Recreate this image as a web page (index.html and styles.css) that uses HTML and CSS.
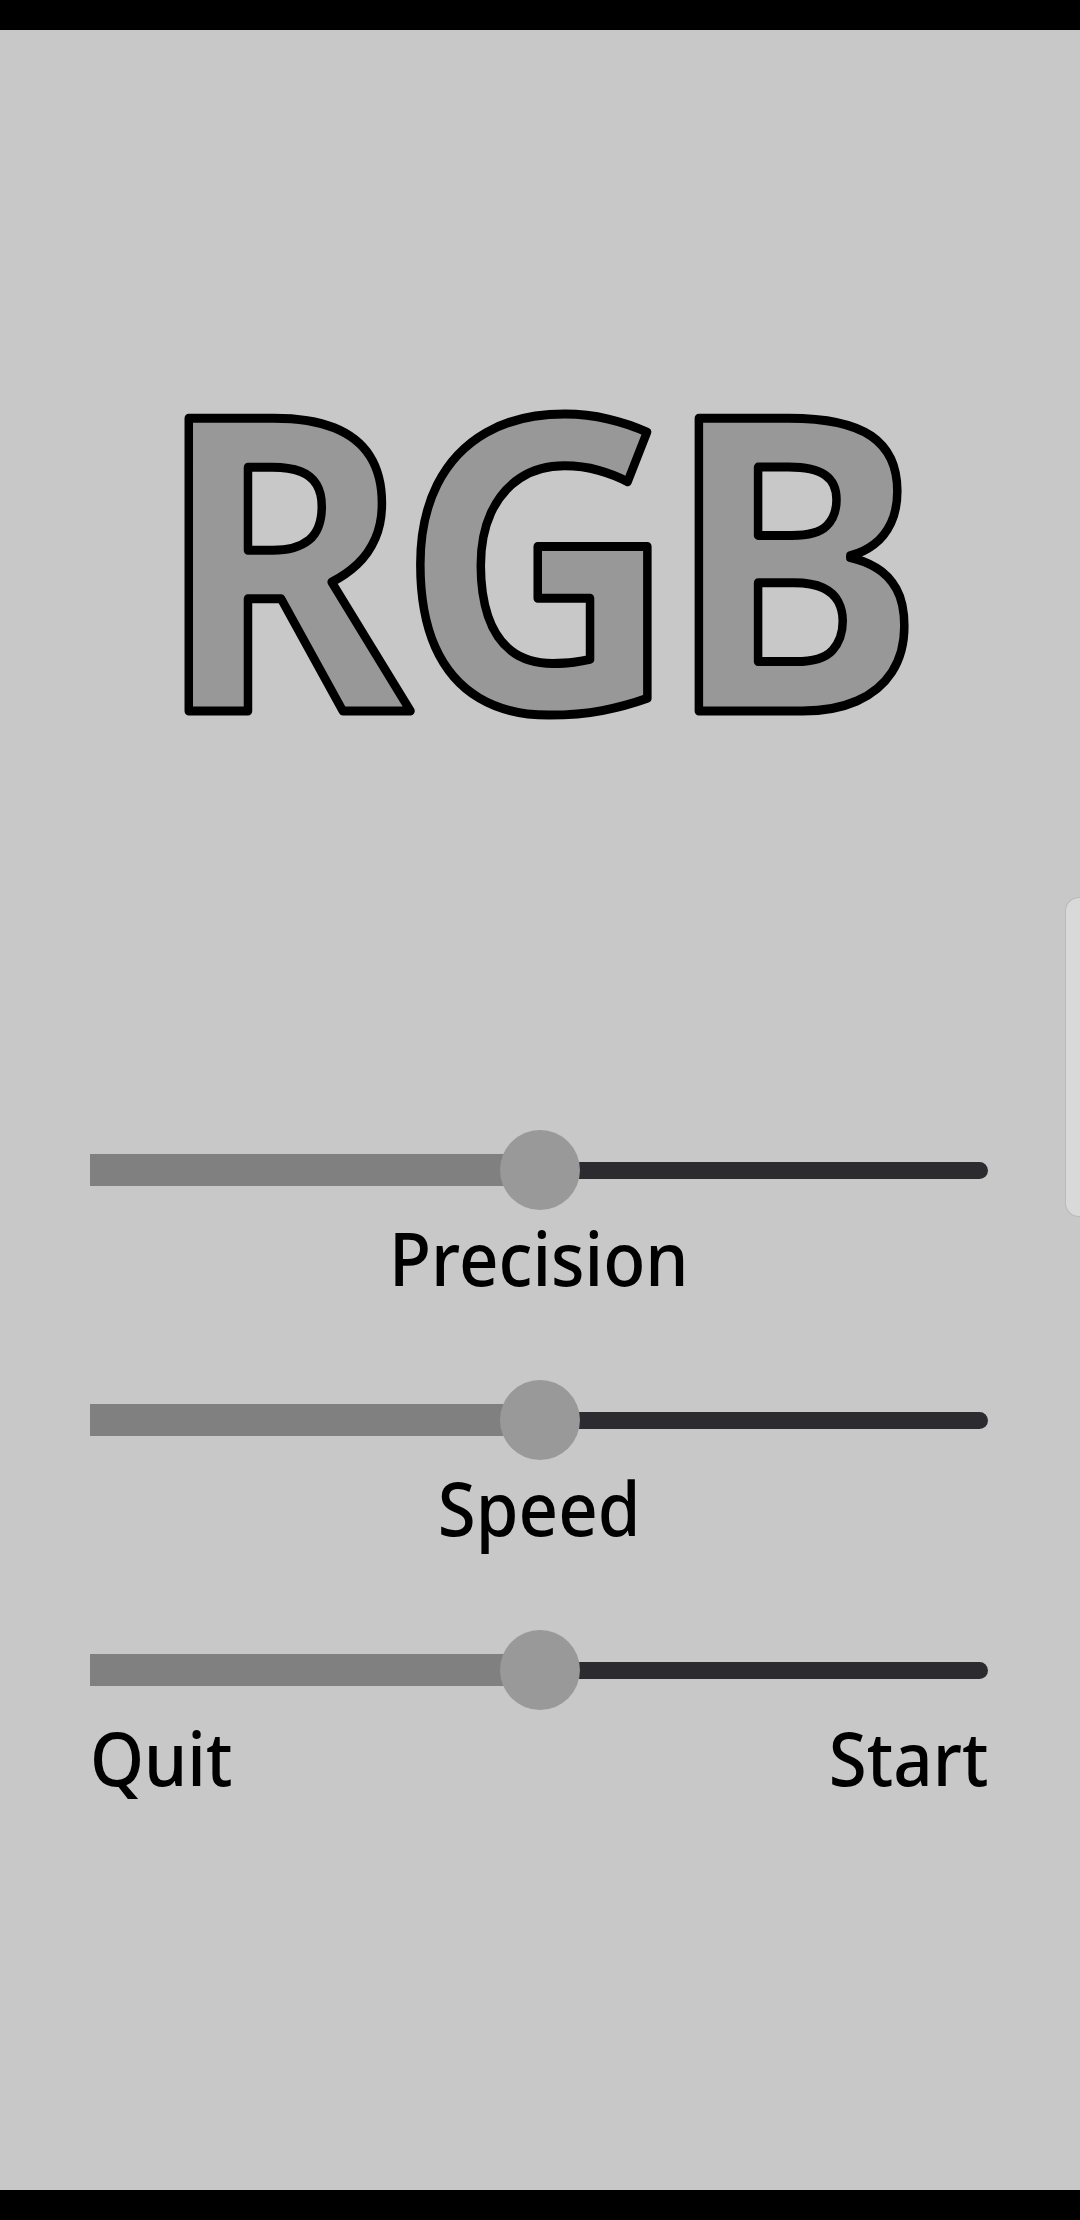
FILE: index.html
```html
<!DOCTYPE html>
<html lang="en">
<head>
<meta charset="utf-8">
<title>RGB</title>
<link rel="stylesheet" href="styles.css">
</head>
<body>
<div class="screen">
  <div class="statusbar"></div>
  <main class="content">
    <svg class="logo" viewBox="0 0 1080 520" width="1080" height="520" aria-label="RGB">
      <g transform="translate(528 461) scale(0.945 1)">
        <text class="logo-text" x="6" y="0" text-anchor="middle">RGB</text>
      </g>
    </svg>
    <section class="controls">
      <div class="group">
        <div class="slider">
          <div class="track-done"></div>
          <div class="track-rest"></div>
          <div class="thumb"></div>
        </div>
        <div class="label center"><span class="txt mid">Precision</span></div>
      </div>
      <div class="group">
        <div class="slider">
          <div class="track-done"></div>
          <div class="track-rest"></div>
          <div class="thumb"></div>
        </div>
        <div class="label center"><span class="txt mid">Speed</span></div>
      </div>
      <div class="group">
        <div class="slider">
          <div class="track-done"></div>
          <div class="track-rest"></div>
          <div class="thumb"></div>
        </div>
        <div class="label split"><span class="txt lft">Quit</span><span class="txt rgt">Start</span></div>
      </div>
    </section>
  </main>
  <div class="navbar"></div>
  <div class="edge-handle"></div>
</div>
</body>
</html>
```
FILE: styles.css
```css
html, body {
  margin: 0;
  padding: 0;
  background: #c8c8c8;
}
.screen {
  position: relative;
  width: 1080px;
  height: 2220px;
  display: flex;
  flex-direction: column;
  background: #c8c8c8;
  overflow: hidden;
  font-family: "Noto Sans", "Open Sans", sans-serif;
}
.statusbar {
  height: 30px;
  flex: 0 0 30px;
  background: #000;
}
.navbar {
  height: 30px;
  flex: 0 0 30px;
  background: #000;
}
.content {
  flex: 1;
  display: flex;
  flex-direction: column;
}
.logo {
  display: block;
  margin-top: 220px;
  width: 1080px;
  height: 520px;
  overflow: visible;
}
.logo-text {
  font-family: "Noto Sans", "Open Sans", sans-serif;
  font-weight: 700;
  font-size: 410px;
  letter-spacing: -13px;
  fill: #989898;
  stroke: #000;
  stroke-width: 9px;
  stroke-linejoin: round;
}
.controls {
  margin-top: 360px;
  padding: 0 92px 0 90px;
  display: flex;
  flex-direction: column;
  gap: 85px;
}
.group {
  display: flex;
  flex-direction: column;
  gap: 10px;
}
.slider {
  position: relative;
  height: 80px;
  display: flex;
  align-items: center;
}
.track-done {
  flex: 0 0 450px;
  height: 32px;
  background: #808080;
}
.track-rest {
  flex: 1;
  height: 17px;
  background: #2b2b30;
  border-radius: 0 9px 9px 0;
}
.thumb {
  position: absolute;
  left: 410px;
  top: 0;
  width: 80px;
  height: 80px;
  border-radius: 50%;
  background: #999999;
}
.label {
  font-family: "Noto Sans", "Open Sans", sans-serif;
  font-size: 75px;
  line-height: 75px;
  height: 75px;
  color: #000;
  font-weight: 500;
}
.label.center {
  text-align: center;
}
.label.split {
  display: flex;
  justify-content: space-between;
}
.txt {
  display: inline-block;
  transform: scaleX(0.92);
}
.txt.mid {
  transform-origin: center;
}
.txt.lft {
  transform-origin: left center;
}
.txt.rgt {
  transform-origin: right center;
}
.edge-handle {
  position: absolute;
  right: 0;
  top: 897px;
  width: 14px;
  height: 318px;
  background: #d9d9d9;
  border: 1px solid #b9b9b9;
  border-right: none;
  border-radius: 14px 0 0 14px;
}
```
